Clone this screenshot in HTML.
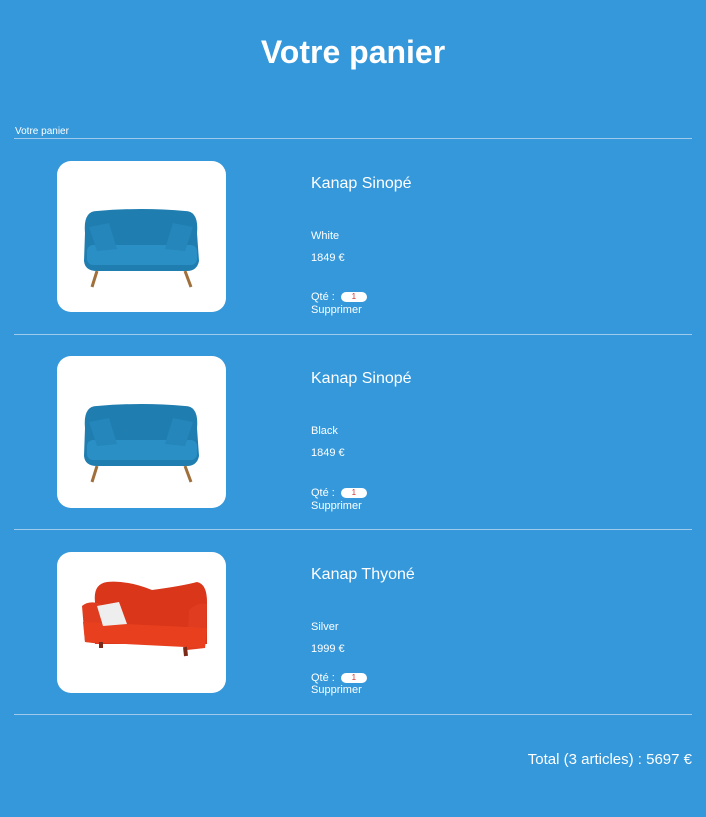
<!DOCTYPE html>
<html><head><meta charset="utf-8"><style>
body{margin:0;width:706px;height:817px;background:#3498db;font-family:"Liberation Sans",sans-serif;color:#fff;position:relative;overflow:hidden}
.a{position:absolute;white-space:nowrap}
.line{position:absolute;left:14px;width:678px;height:1px;background:#9fcaec}
.img{position:absolute;left:57px;width:169px;background:#fff;border-radius:14px}
.img svg{position:absolute;left:0;top:0}
.n{font-size:16px}
.s{font-size:11px}
.q{display:inline-block;width:26px;height:10px;background:#fff;border-radius:6px;color:#c33;font-size:8px;text-align:center;line-height:10px;vertical-align:middle;margin-left:3px}
</style></head><body>
<div class="a" style="left:0;width:706px;text-align:center;top:34px;font-size:32px;font-weight:bold">Votre panier</div>
<div class="a" style="left:15px;top:126px;font-size:10px">Votre panier</div>
<div class="line" style="top:138px"></div>

<div class="img" style="top:161px;height:151px"><svg width="169" height="151">
<path d="M28 72 Q26 50 40 50 Q85 46 128 50 Q142 50 140 72 L142 100 Q140 110 130 110 L40 110 Q28 110 27 100 Z" fill="#1f7db0"/>
<rect x="30" y="84" width="110" height="20" rx="6" fill="#2a8fc4"/>
<path d="M32 66 L52 62 L60 88 L40 90Z" fill="#2486bb"/><path d="M136 66 L116 62 L108 88 L128 90Z" fill="#2486bb"/>
<path d="M40 110 L35 126 M128 110 L134 126" stroke="#a0703c" stroke-width="3"/>
</svg></div>
<div class="a n" style="left:311px;top:175px">Kanap Sinopé</div>
<div class="a s" style="left:311px;top:230px">White</div>
<div class="a s" style="left:311px;top:252px">1849 €</div>
<div class="a s" style="left:311px;top:291px">Qté : <span class="q">1</span></div>
<div class="a s" style="left:311px;top:304px">Supprimer</div>
<div class="line" style="top:334px"></div>

<div class="img" style="top:356px;height:152px"><svg width="169" height="152">
<path d="M28 72 Q26 50 40 50 Q85 46 128 50 Q142 50 140 72 L142 100 Q140 110 130 110 L40 110 Q28 110 27 100 Z" fill="#1f7db0"/>
<rect x="30" y="84" width="110" height="20" rx="6" fill="#2a8fc4"/>
<path d="M32 66 L52 62 L60 88 L40 90Z" fill="#2486bb"/><path d="M136 66 L116 62 L108 88 L128 90Z" fill="#2486bb"/>
<path d="M40 110 L35 126 M128 110 L134 126" stroke="#a0703c" stroke-width="3"/>
</svg></div>
<div class="a n" style="left:311px;top:370px">Kanap Sinopé</div>
<div class="a s" style="left:311px;top:425px">Black</div>
<div class="a s" style="left:311px;top:447px">1849 €</div>
<div class="a s" style="left:311px;top:487px">Qté : <span class="q">1</span></div>
<div class="a s" style="left:311px;top:500px">Supprimer</div>
<div class="line" style="top:529px"></div>

<div class="img" style="top:552px;height:141px"><svg width="169" height="141">
<path d="M38 50 Q36 32 50 30 Q70 28 95 38 Q125 34 140 30 Q150 32 150 50 L150 92 L38 92 Z" fill="#d9361a"/>
<path d="M25 54 Q32 48 44 52 L44 92 L28 90 Z" fill="#e03c1f"/>
<path d="M150 52 Q140 50 132 58 L130 98 L148 96 Z" fill="#e03c1f"/>
<path d="M26 70 L150 76 L148 96 L28 90Z" fill="#e8401f"/>
<path d="M40 54 L62 50 L70 72 L46 74Z" fill="#eee"/>
<path d="M44 90 L44 96 M128 95 L129 104" stroke="#7a2a18" stroke-width="4"/>
</svg></div>
<div class="a n" style="left:311px;top:566px">Kanap Thyoné</div>
<div class="a s" style="left:311px;top:621px">Silver</div>
<div class="a s" style="left:311px;top:643px">1999 €</div>
<div class="a s" style="left:311px;top:672px">Qté : <span class="q">1</span></div>
<div class="a s" style="left:311px;top:684px">Supprimer</div>
<div class="line" style="top:714px"></div>

<div class="a" style="right:14px;top:751px;font-size:15px">Total (3 articles) : 5697 €</div>
</body></html>
